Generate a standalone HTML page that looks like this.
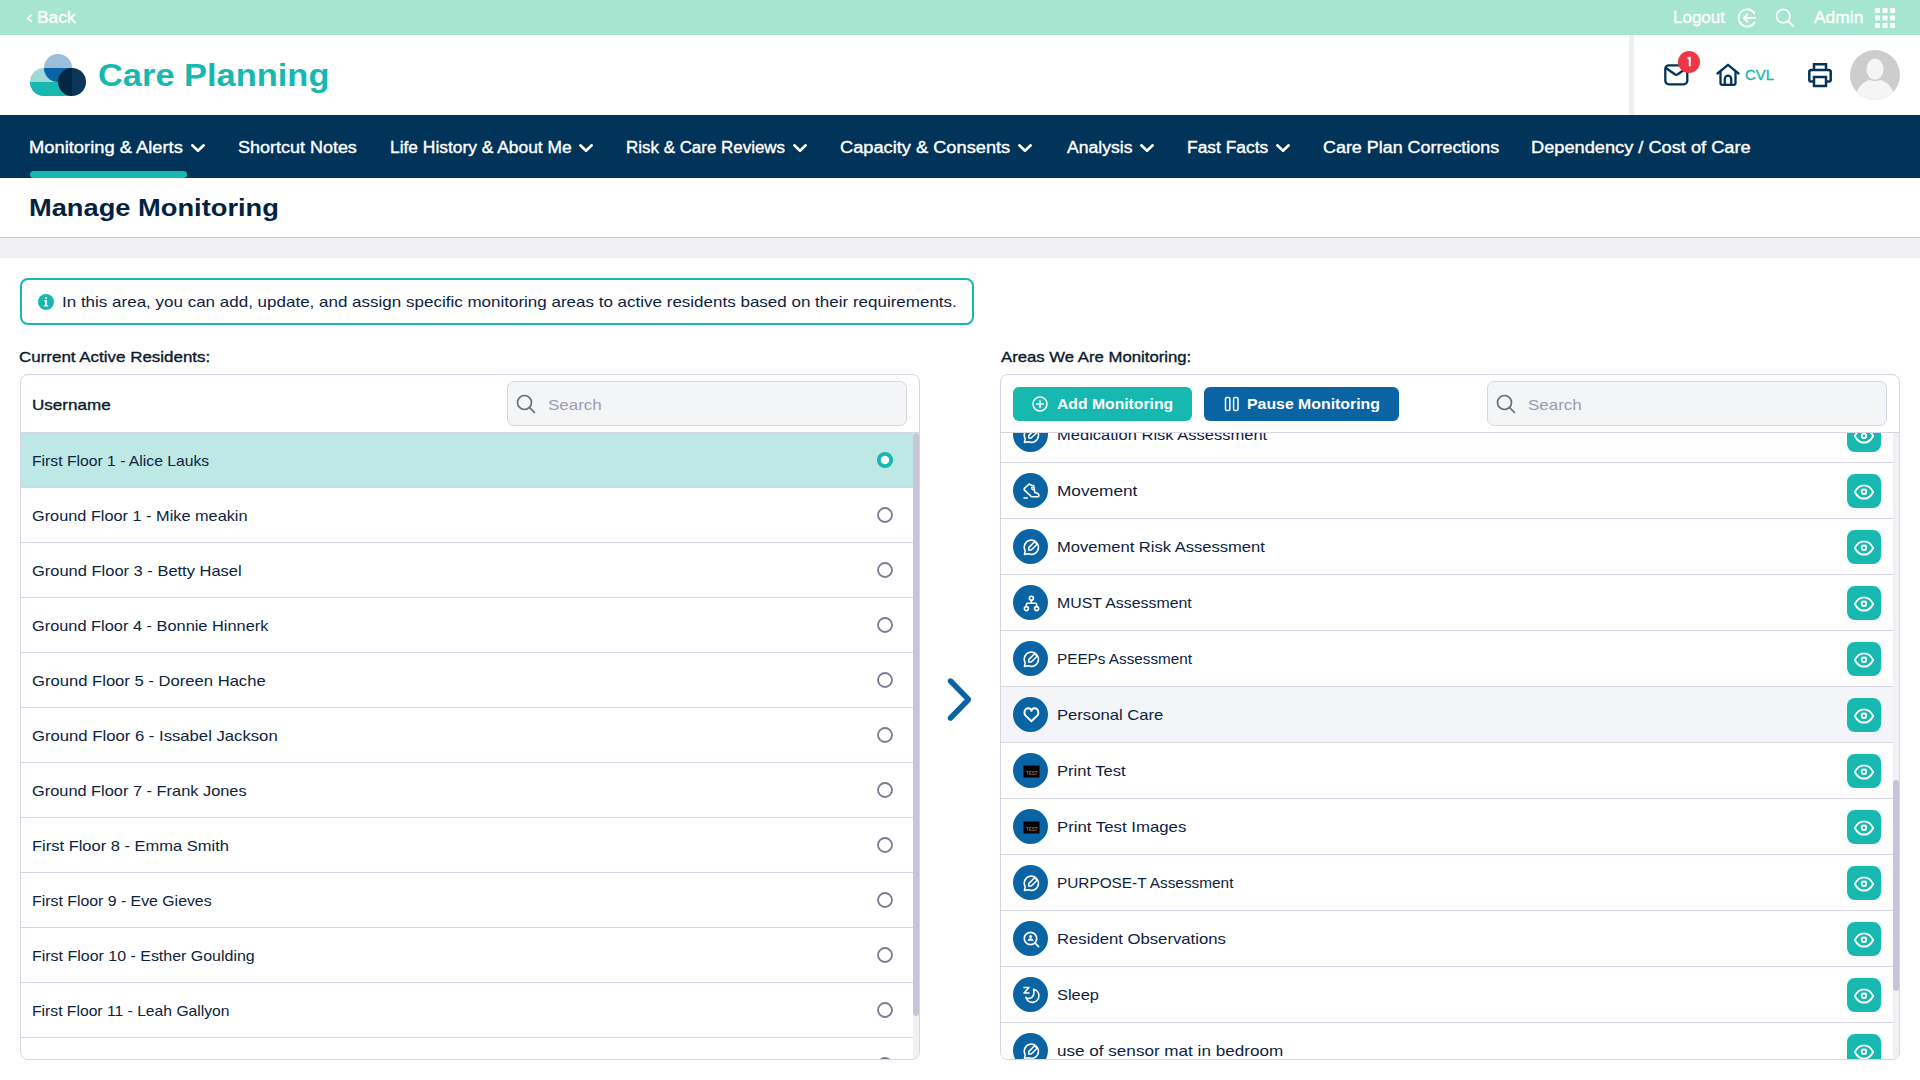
<!DOCTYPE html>
<html><head><meta charset='utf-8'><style>
*{box-sizing:border-box;margin:0;padding:0}
html,body{width:1920px;height:1080px;overflow:hidden;background:#fff;font-family:"Liberation Sans",sans-serif}
.t{position:absolute;white-space:pre;line-height:1;transform-origin:0 0}
.a{position:absolute;overflow:visible}
.b{position:absolute}
.lrow{position:absolute;left:21px;width:892px;height:55px;border-bottom:1px solid #d5d5e3;background:#fff}
.lrow.sel{background:#bee8e6}
.rrow{position:absolute;left:1001px;width:892px;height:56px;border-bottom:1px solid #d5d5e3;background:#fff}
.rrow.hov{background:#f4f5f8}
.ric{position:absolute;left:1013px;width:35px;height:35px;border-radius:50%;background:#0a64a3}
.eye{position:absolute;left:1847px;width:34px;height:34px;border-radius:8px;background:#17b8b0}
.eye svg{position:absolute}
</style></head><body>
<div class='b' style='left:0;top:0;width:1920px;height:35px;background:#a6e5cf'></div>
<svg class='a' style='left:24px;top:12px' width='12' height='12'><path d='M7.3 3.3 L3.6 6.3 L7.3 9.3' fill='none' stroke='#fff' stroke-width='1.9' stroke-linecap='round' stroke-linejoin='round'/></svg>
<svg class='a' style='left:1735px;top:7px' width='24' height='22' viewBox='0 0 24 22'><path d='M19.5 6.5 A8.6 8.6 0 1 0 19.5 15.5' fill='none' stroke='#fff' stroke-width='1.8' stroke-linecap='round'/><path d='M20.3 11 H8.8 M12.3 7.3 L8.8 11 L12.3 14.7' fill='none' stroke='#fff' stroke-width='1.8' stroke-linecap='round' stroke-linejoin='round'/></svg>
<svg class='a' style='left:1774px;top:7px' width='22' height='22' viewBox='0 0 22 22'><circle cx='9.3' cy='9.1' r='6.7' fill='none' stroke='#fff' stroke-width='1.7'/><path d='M14.2 14.1 L19.2 19.1' stroke='#fff' stroke-width='1.7' stroke-linecap='round'/></svg>
<svg class='a' style='left:1875px;top:8px' width='20' height='20' viewBox='0 0 20 20'><rect x='0' y='0' width='5' height='5' rx='0.7' fill='#fff'/><rect x='7.5' y='0' width='5' height='5' rx='0.7' fill='#fff'/><rect x='15' y='0' width='5' height='5' rx='0.7' fill='#fff'/><rect x='0' y='7.5' width='5' height='5' rx='0.7' fill='#fff'/><rect x='7.5' y='7.5' width='5' height='5' rx='0.7' fill='#fff'/><rect x='15' y='7.5' width='5' height='5' rx='0.7' fill='#fff'/><rect x='0' y='15' width='5' height='5' rx='0.7' fill='#fff'/><rect x='7.5' y='15' width='5' height='5' rx='0.7' fill='#fff'/><rect x='15' y='15' width='5' height='5' rx='0.7' fill='#fff'/></svg>

<!-- header -->
<svg class='a' style='left:30px;top:53px' width='58' height='45' viewBox='30 53 58 45'>
<defs><clipPath id='ctop'><rect x='0' y='0' width='200' height='68'/></clipPath><clipPath id='cbot'><rect x='0' y='68' width='200' height='40'/></clipPath>
<clipPath id='cl'><rect x='0' y='0' width='72' height='200'/></clipPath><clipPath id='cr'><rect x='72' y='0' width='100' height='200'/></clipPath></defs>
<rect x='30' y='68' width='42' height='28' rx='14' fill='#9fd9d6'/>
<path d='M44 82 H72 V96 H44 A14 14 0 0 1 30 82 Z' fill='#17b8b0'/>
<circle cx='58' cy='68' r='14' fill='#9bbfdb'/>
<path d='M44 68 H72 A14 14 0 0 1 44 68 Z' fill='#0a63a5'/>
<circle cx='72' cy='82' r='14' fill='#012745' clip-path='url(#cl)'/>
<circle cx='72' cy='82' r='14' fill='#0c3659' clip-path='url(#cr)'/>
</svg>
<div class='b' style='left:1629px;top:35px;width:5px;height:80px;background:#eeeef3'></div>
<svg class='a' style='left:1662px;top:62px' width='28' height='25' viewBox='0 0 28 25'><rect x='3.3' y='3.3' width='22' height='19' rx='3.5' fill='none' stroke='#023459' stroke-width='2.3'/><path d='M4.3 6.3 L12.8 12.3 Q14.3 13.3 15.8 12.3 L24.3 6.3' fill='none' stroke='#023459' stroke-width='2.3' stroke-linejoin='round' stroke-linecap='round'/></svg>
<svg class='a' style='left:1678px;top:51px' width='22' height='22'><circle cx='11' cy='11' r='11' fill='#f03545'/><path d='M9.6 7.6 L11.8 6.6 V15.2' fill='none' stroke='#fff' stroke-width='2' stroke-linejoin='round'/></svg>
<svg class='a' style='left:1714px;top:62px' width='28' height='26' viewBox='0 0 28 26'><path d='M3.5 11.5 L14 2.8 L24.5 11.5' fill='none' stroke='#023459' stroke-width='2.3' stroke-linecap='round' stroke-linejoin='round'/><path d='M6.5 9.5 V21 Q6.5 22.8 8.3 22.8 H19.7 Q21.5 22.8 21.5 21 V9.5' fill='none' stroke='#023459' stroke-width='2.3' stroke-linejoin='round'/><path d='M10.8 23 V16.8 A3.2 3.2 0 0 1 17.2 16.8 V23' fill='none' stroke='#023459' stroke-width='2.3'/></svg>
<svg class='a' style='left:1806px;top:61px' width='28' height='28' viewBox='0 0 28 28'><path d='M8 9 V3.3 H20 V9' fill='none' stroke='#023459' stroke-width='2.5'/><path d='M7.5 20.5 H4.5 Q3.3 20.5 3.3 19.3 V11 Q3.3 9 5.3 9 H22.7 Q24.7 9 24.7 11 V19.3 Q24.7 20.5 23.5 20.5 H20.5' fill='none' stroke='#023459' stroke-width='2.5' stroke-linejoin='round'/><rect x='8' y='16' width='12' height='9' fill='none' stroke='#023459' stroke-width='2.5'/></svg>
<svg class='a' style='left:1850px;top:50px' width='50' height='50' viewBox='0 0 50 50'><defs><clipPath id='av'><circle cx='25' cy='25' r='25'/></clipPath></defs><circle cx='25' cy='25' r='25' fill='#cdcdcd'/><g clip-path='url(#av)'><path d='M5.5 50 Q6 31 25 29 Q44 31 44.5 50 Z' fill='#f5f5f5'/><ellipse cx='25' cy='19.2' rx='9.3' ry='11.3' fill='#f5f5f5' stroke='#cdcdcd' stroke-width='1.4'/></g></svg>

<!-- nav -->
<div class='b' style='left:0;top:115px;width:1920px;height:63px;background:#023459'></div>
<div class='b' style='left:30px;top:171px;width:157px;height:7px;background:#17b8b0;border-radius:4px'></div>
<svg class='a' style='left:191px;top:144px' width='14' height='8' viewBox='0 0 14 8'><path d='M1.3 1.3 L7.0 6.7 L12.7 1.3' fill='none' stroke='#fff' stroke-width='2.6' stroke-linecap='round' stroke-linejoin='round'/></svg><svg class='a' style='left:579px;top:144px' width='14' height='8' viewBox='0 0 14 8'><path d='M1.3 1.3 L7.0 6.7 L12.7 1.3' fill='none' stroke='#fff' stroke-width='2.6' stroke-linecap='round' stroke-linejoin='round'/></svg><svg class='a' style='left:793px;top:144px' width='14' height='8' viewBox='0 0 14 8'><path d='M1.3 1.3 L7.0 6.7 L12.7 1.3' fill='none' stroke='#fff' stroke-width='2.6' stroke-linecap='round' stroke-linejoin='round'/></svg><svg class='a' style='left:1018px;top:144px' width='14' height='8' viewBox='0 0 14 8'><path d='M1.3 1.3 L7.0 6.7 L12.7 1.3' fill='none' stroke='#fff' stroke-width='2.6' stroke-linecap='round' stroke-linejoin='round'/></svg><svg class='a' style='left:1140px;top:144px' width='14' height='8' viewBox='0 0 14 8'><path d='M1.3 1.3 L7.0 6.7 L12.7 1.3' fill='none' stroke='#fff' stroke-width='2.6' stroke-linecap='round' stroke-linejoin='round'/></svg><svg class='a' style='left:1276px;top:144px' width='14' height='8' viewBox='0 0 14 8'><path d='M1.3 1.3 L7.0 6.7 L12.7 1.3' fill='none' stroke='#fff' stroke-width='2.6' stroke-linecap='round' stroke-linejoin='round'/></svg>

<div class='b' style='left:0;top:237px;width:1920px;height:1px;background:#c9cad9'></div>
<div class='b' style='left:0;top:238px;width:1920px;height:20px;background:#efeff4'></div>

<div class='b' style='left:20px;top:278px;width:954px;height:47px;border:2px solid #17b8b0;border-radius:8px'></div>
<svg class='a' style='left:38px;top:294px' width='16' height='16' viewBox='0 0 16 16'><circle cx='8' cy='8' r='8' fill='#17b8b0'/><rect x='7.1' y='6.2' width='1.8' height='5.6' fill='#fff'/><rect x='6.1' y='6.2' width='2.8' height='1.2' fill='#fff'/><rect x='5.9' y='11.2' width='4.2' height='1.3' fill='#fff'/><rect x='7.1' y='3.3' width='1.8' height='1.6' fill='#fff'/></svg>


<!-- left table -->
<div class='b' style='left:20px;top:374px;width:900px;height:686px;border:1px solid #d5d5e3;border-radius:8px;overflow:hidden;background:#fff'>
</div>
<div class='b' style='left:21px;top:433px;width:898px;height:626px;overflow:hidden;border-radius:0 0 7px 7px'>
 <div class='b' style='left:-21px;top:-433px;width:1920px;height:1600px'>
  <div class='lrow sel' style='top:433px'></div><svg class='a' style='left:876px;top:451px' width='18' height='18'><circle cx='9' cy='9' r='6.2' fill='#fff' stroke='#17b8b0' stroke-width='3.8'/></svg><div class='lrow' style='top:488px'></div><svg class='a' style='left:876px;top:506px' width='18' height='18'><circle cx='9' cy='9' r='7' fill='none' stroke='#7b7b95' stroke-width='1.8'/></svg><div class='lrow' style='top:543px'></div><svg class='a' style='left:876px;top:561px' width='18' height='18'><circle cx='9' cy='9' r='7' fill='none' stroke='#7b7b95' stroke-width='1.8'/></svg><div class='lrow' style='top:598px'></div><svg class='a' style='left:876px;top:616px' width='18' height='18'><circle cx='9' cy='9' r='7' fill='none' stroke='#7b7b95' stroke-width='1.8'/></svg><div class='lrow' style='top:653px'></div><svg class='a' style='left:876px;top:671px' width='18' height='18'><circle cx='9' cy='9' r='7' fill='none' stroke='#7b7b95' stroke-width='1.8'/></svg><div class='lrow' style='top:708px'></div><svg class='a' style='left:876px;top:726px' width='18' height='18'><circle cx='9' cy='9' r='7' fill='none' stroke='#7b7b95' stroke-width='1.8'/></svg><div class='lrow' style='top:763px'></div><svg class='a' style='left:876px;top:781px' width='18' height='18'><circle cx='9' cy='9' r='7' fill='none' stroke='#7b7b95' stroke-width='1.8'/></svg><div class='lrow' style='top:818px'></div><svg class='a' style='left:876px;top:836px' width='18' height='18'><circle cx='9' cy='9' r='7' fill='none' stroke='#7b7b95' stroke-width='1.8'/></svg><div class='lrow' style='top:873px'></div><svg class='a' style='left:876px;top:891px' width='18' height='18'><circle cx='9' cy='9' r='7' fill='none' stroke='#7b7b95' stroke-width='1.8'/></svg><div class='lrow' style='top:928px'></div><svg class='a' style='left:876px;top:946px' width='18' height='18'><circle cx='9' cy='9' r='7' fill='none' stroke='#7b7b95' stroke-width='1.8'/></svg><div class='lrow' style='top:983px'></div><svg class='a' style='left:876px;top:1001px' width='18' height='18'><circle cx='9' cy='9' r='7' fill='none' stroke='#7b7b95' stroke-width='1.8'/></svg><div class='lrow' style='top:1038px'></div><svg class='a' style='left:876px;top:1056px' width='18' height='18'><circle cx='9' cy='9' r='7' fill='none' stroke='#7b7b95' stroke-width='1.8'/></svg><div class='t' style='left:32.45px;top:453.00px;font-size:15px;font-weight:400;color:#0c2340;transform:scaleX(1.0470);'>First Floor 1 - Alice Lauks</div><div class='t' style='left:32.41px;top:508.00px;font-size:15px;font-weight:400;color:#0c2340;transform:scaleX(1.0863);'>Ground Floor 1 - Mike meakin</div><div class='t' style='left:32.40px;top:563.00px;font-size:15px;font-weight:400;color:#0c2340;transform:scaleX(1.0979);'>Ground Floor 3 - Betty Hasel</div><div class='t' style='left:32.41px;top:618.00px;font-size:15px;font-weight:400;color:#0c2340;transform:scaleX(1.0903);'>Ground Floor 4 - Bonnie Hinnerk</div><div class='t' style='left:32.39px;top:673.00px;font-size:15px;font-weight:400;color:#0c2340;transform:scaleX(1.1077);'>Ground Floor 5 - Doreen Hache</div><div class='t' style='left:32.39px;top:728.00px;font-size:15px;font-weight:400;color:#0c2340;transform:scaleX(1.1119);'>Ground Floor 6 - Issabel Jackson</div><div class='t' style='left:32.41px;top:783.00px;font-size:15px;font-weight:400;color:#0c2340;transform:scaleX(1.0908);'>Ground Floor 7 - Frank Jones</div><div class='t' style='left:32.40px;top:838.00px;font-size:15px;font-weight:400;color:#0c2340;transform:scaleX(1.0994);'>First Floor 8 - Emma Smith</div><div class='t' style='left:32.44px;top:893.00px;font-size:15px;font-weight:400;color:#0c2340;transform:scaleX(1.0562);'>First Floor 9 - Eve Gieves</div><div class='t' style='left:32.44px;top:948.00px;font-size:15px;font-weight:400;color:#0c2340;transform:scaleX(1.0644);'>First Floor 10 - Esther Goulding</div><div class='t' style='left:32.45px;top:1003.00px;font-size:15px;font-weight:400;color:#0c2340;transform:scaleX(1.0455);'>First Floor 11 - Leah Gallyon</div>
 </div>
 <div class='b' style='left:892px;top:0;width:6px;height:627px;background:#f0f0f5'></div>
 <div class='b' style='left:892px;top:0;width:6px;height:583px;background:#c5c6d8;border-radius:3px'></div>
</div>
<div class='b' style='left:21px;top:432px;width:898px;height:1px;background:#d5d5e3'></div>
<div class='b' style='left:507px;top:381px;width:400px;height:45px;border:1px solid #d6d6e2;border-radius:7px;background:#f4f5f7'></div>
<svg class='a' style='left:515px;top:393px' width='22' height='22' viewBox='0 0 22 22'><circle cx='9.5' cy='9.5' r='7' fill='none' stroke='#6b6d7c' stroke-width='1.7'/><path d='M14.5 14.5 L19.5 19.5' stroke='#6b6d7c' stroke-width='1.7' stroke-linecap='round'/></svg>

<!-- arrow -->
<svg class='a' style='left:940px;top:670px' width='40' height='60' viewBox='0 0 40 60'><path d='M10.5 11 L28.5 29.5 L10.5 48' fill='none' stroke='#0a64a3' stroke-width='5.4' stroke-linecap='round' stroke-linejoin='round'/></svg>

<!-- right panel -->
<div class='b' style='left:1000px;top:374px;width:900px;height:686px;border:1px solid #d5d5e3;border-radius:8px;background:#fff'></div>
<div class='b' style='left:1001px;top:433px;width:898px;height:626px;overflow:hidden;border-radius:0 0 7px 7px'>
 <div class='b' style='left:-1001px;top:-433px;width:1920px;height:1700px'>
  <div class='rrow' style='top:407px'></div><div class='ric' style='top:417.0px'><svg width='18' height='18' viewBox='0 0 18 18' style='position:absolute;left:8.5px;top:8.5px'><path d='M3.25 12.85 A7.1 7.1 0 1 1 6.4 15.7 L2.5 16.5 Z' fill='none' stroke='#fff' stroke-linecap='round' stroke-linejoin='round' stroke-width='1.6'/><path d='M6.7 12.0 V9.6 L12.6 3.7 L15.1 6.2 L9.2 12.0 Z' fill='none' stroke='#fff' stroke-linecap='round' stroke-linejoin='round' stroke-width='1.5'/></svg></div><div class='eye' style='top:418px'><svg width='22' height='22' viewBox='0 0 24 24' style='left:6px;top:6.8px'><path d='M2 12 C4.5 7 8 4.8 12 4.8 C16 4.8 19.5 7 22 12 C19.5 17 16 19.2 12 19.2 C8 19.2 4.5 17 2 12 Z' fill='none' stroke='#fff' stroke-width='2' stroke-linejoin='round'/><circle cx='12' cy='11.8' r='2.5' fill='none' stroke='#fff' stroke-width='2'/></svg></div><div class='rrow' style='top:463px'></div><div class='ric' style='top:473.0px'><svg width='18' height='18' viewBox='0 0 18 18' style='position:absolute;left:8.5px;top:8.5px'><path d='M6.8 2.3 L2.4 6.4 Q1.7 7.3 2.5 8.1 L9.2 14.3 Q9.8 14.8 10.6 14.8 L15.6 14.8 Q16.9 14.8 16.9 13.4 Q16.9 12.1 15.6 11.5 L12.8 10.3 L11.7 3.6 L9.5 3.5 L8.0 2.4 Q7.4 2.0 6.8 2.3 Z' fill='none' stroke='#fff' stroke-linecap='round' stroke-linejoin='round' stroke-width='1.6'/><path d='M11.8 5.4 L9.6 5.5 L10.2 7.5 L12.2 7.6' fill='none' stroke='#fff' stroke-linecap='round' stroke-linejoin='round' stroke-width='1.3'/><path d='M2.0 16.1 L5.4 16.1' fill='none' stroke='#fff' stroke-linecap='round' stroke-linejoin='round' stroke-width='1.5'/></svg></div><div class='eye' style='top:474px'><svg width='22' height='22' viewBox='0 0 24 24' style='left:6px;top:6.8px'><path d='M2 12 C4.5 7 8 4.8 12 4.8 C16 4.8 19.5 7 22 12 C19.5 17 16 19.2 12 19.2 C8 19.2 4.5 17 2 12 Z' fill='none' stroke='#fff' stroke-width='2' stroke-linejoin='round'/><circle cx='12' cy='11.8' r='2.5' fill='none' stroke='#fff' stroke-width='2'/></svg></div><div class='rrow' style='top:519px'></div><div class='ric' style='top:529.0px'><svg width='18' height='18' viewBox='0 0 18 18' style='position:absolute;left:8.5px;top:8.5px'><path d='M3.25 12.85 A7.1 7.1 0 1 1 6.4 15.7 L2.5 16.5 Z' fill='none' stroke='#fff' stroke-linecap='round' stroke-linejoin='round' stroke-width='1.6'/><path d='M6.7 12.0 V9.6 L12.6 3.7 L15.1 6.2 L9.2 12.0 Z' fill='none' stroke='#fff' stroke-linecap='round' stroke-linejoin='round' stroke-width='1.5'/></svg></div><div class='eye' style='top:530px'><svg width='22' height='22' viewBox='0 0 24 24' style='left:6px;top:6.8px'><path d='M2 12 C4.5 7 8 4.8 12 4.8 C16 4.8 19.5 7 22 12 C19.5 17 16 19.2 12 19.2 C8 19.2 4.5 17 2 12 Z' fill='none' stroke='#fff' stroke-width='2' stroke-linejoin='round'/><circle cx='12' cy='11.8' r='2.5' fill='none' stroke='#fff' stroke-width='2'/></svg></div><div class='rrow' style='top:575px'></div><div class='ric' style='top:585.0px'><svg width='18' height='18' viewBox='0 0 18 18' style='position:absolute;left:8.5px;top:8.5px'><circle cx='9.4' cy='4.2' r='2' fill='none' stroke='#fff' stroke-linecap='round' stroke-linejoin='round' stroke-width='1.6'/><circle cx='4.4' cy='14.6' r='2' fill='none' stroke='#fff' stroke-linecap='round' stroke-linejoin='round' stroke-width='1.6'/><circle cx='14.6' cy='14.6' r='2' fill='none' stroke='#fff' stroke-linecap='round' stroke-linejoin='round' stroke-width='1.6'/><path d='M9.4 6.2 V9.3 M4.4 12.6 V10.3 Q4.4 9.3 5.4 9.3 H13.6 Q14.6 9.3 14.6 10.3 V12.6' fill='none' stroke='#fff' stroke-linecap='round' stroke-linejoin='round' stroke-width='1.6'/></svg></div><div class='eye' style='top:586px'><svg width='22' height='22' viewBox='0 0 24 24' style='left:6px;top:6.8px'><path d='M2 12 C4.5 7 8 4.8 12 4.8 C16 4.8 19.5 7 22 12 C19.5 17 16 19.2 12 19.2 C8 19.2 4.5 17 2 12 Z' fill='none' stroke='#fff' stroke-width='2' stroke-linejoin='round'/><circle cx='12' cy='11.8' r='2.5' fill='none' stroke='#fff' stroke-width='2'/></svg></div><div class='rrow' style='top:631px'></div><div class='ric' style='top:641.0px'><svg width='18' height='18' viewBox='0 0 18 18' style='position:absolute;left:8.5px;top:8.5px'><path d='M3.25 12.85 A7.1 7.1 0 1 1 6.4 15.7 L2.5 16.5 Z' fill='none' stroke='#fff' stroke-linecap='round' stroke-linejoin='round' stroke-width='1.6'/><path d='M6.7 12.0 V9.6 L12.6 3.7 L15.1 6.2 L9.2 12.0 Z' fill='none' stroke='#fff' stroke-linecap='round' stroke-linejoin='round' stroke-width='1.5'/></svg></div><div class='eye' style='top:642px'><svg width='22' height='22' viewBox='0 0 24 24' style='left:6px;top:6.8px'><path d='M2 12 C4.5 7 8 4.8 12 4.8 C16 4.8 19.5 7 22 12 C19.5 17 16 19.2 12 19.2 C8 19.2 4.5 17 2 12 Z' fill='none' stroke='#fff' stroke-width='2' stroke-linejoin='round'/><circle cx='12' cy='11.8' r='2.5' fill='none' stroke='#fff' stroke-width='2'/></svg></div><div class='rrow hov' style='top:687px'></div><div class='ric' style='top:697.0px'><svg width='18' height='18' viewBox='0 0 18 18' style='position:absolute;left:8.5px;top:8.5px'><path d='M9.4 15.2 L3.6 9.6 C2 8 2 4.5 4 3 C5.8 1.6 8.4 2 9.4 4.8 C10.4 2 13 1.6 14.8 3 C16.8 4.5 16.8 8 15.2 9.6 Z' fill='none' stroke='#fff' stroke-linecap='round' stroke-linejoin='round' stroke-width='2'/></svg></div><div class='eye' style='top:698px'><svg width='22' height='22' viewBox='0 0 24 24' style='left:6px;top:6.8px'><path d='M2 12 C4.5 7 8 4.8 12 4.8 C16 4.8 19.5 7 22 12 C19.5 17 16 19.2 12 19.2 C8 19.2 4.5 17 2 12 Z' fill='none' stroke='#fff' stroke-width='2' stroke-linejoin='round'/><circle cx='12' cy='11.8' r='2.5' fill='none' stroke='#fff' stroke-width='2'/></svg></div><div class='rrow' style='top:743px'></div><div class='ric' style='top:753.0px'><svg width='18' height='18' viewBox='0 0 18 18' style='position:absolute;left:8.5px;top:8.5px'><rect x='1.5' y='3.5' width='16' height='12' fill='#000'/><text x='9.8' y='12.6' font-size='5.5' text-anchor='middle' fill='#9a6a38' font-family='Liberation Sans' font-weight='700' textLength='11.4' lengthAdjust='spacingAndGlyphs'>TEST</text></svg></div><div class='eye' style='top:754px'><svg width='22' height='22' viewBox='0 0 24 24' style='left:6px;top:6.8px'><path d='M2 12 C4.5 7 8 4.8 12 4.8 C16 4.8 19.5 7 22 12 C19.5 17 16 19.2 12 19.2 C8 19.2 4.5 17 2 12 Z' fill='none' stroke='#fff' stroke-width='2' stroke-linejoin='round'/><circle cx='12' cy='11.8' r='2.5' fill='none' stroke='#fff' stroke-width='2'/></svg></div><div class='rrow' style='top:799px'></div><div class='ric' style='top:809.0px'><svg width='18' height='18' viewBox='0 0 18 18' style='position:absolute;left:8.5px;top:8.5px'><rect x='1.5' y='3.5' width='16' height='12' fill='#000'/><text x='9.8' y='12.6' font-size='5.5' text-anchor='middle' fill='#9a6a38' font-family='Liberation Sans' font-weight='700' textLength='11.4' lengthAdjust='spacingAndGlyphs'>TEST</text></svg></div><div class='eye' style='top:810px'><svg width='22' height='22' viewBox='0 0 24 24' style='left:6px;top:6.8px'><path d='M2 12 C4.5 7 8 4.8 12 4.8 C16 4.8 19.5 7 22 12 C19.5 17 16 19.2 12 19.2 C8 19.2 4.5 17 2 12 Z' fill='none' stroke='#fff' stroke-width='2' stroke-linejoin='round'/><circle cx='12' cy='11.8' r='2.5' fill='none' stroke='#fff' stroke-width='2'/></svg></div><div class='rrow' style='top:855px'></div><div class='ric' style='top:865.0px'><svg width='18' height='18' viewBox='0 0 18 18' style='position:absolute;left:8.5px;top:8.5px'><path d='M3.25 12.85 A7.1 7.1 0 1 1 6.4 15.7 L2.5 16.5 Z' fill='none' stroke='#fff' stroke-linecap='round' stroke-linejoin='round' stroke-width='1.6'/><path d='M6.7 12.0 V9.6 L12.6 3.7 L15.1 6.2 L9.2 12.0 Z' fill='none' stroke='#fff' stroke-linecap='round' stroke-linejoin='round' stroke-width='1.5'/></svg></div><div class='eye' style='top:866px'><svg width='22' height='22' viewBox='0 0 24 24' style='left:6px;top:6.8px'><path d='M2 12 C4.5 7 8 4.8 12 4.8 C16 4.8 19.5 7 22 12 C19.5 17 16 19.2 12 19.2 C8 19.2 4.5 17 2 12 Z' fill='none' stroke='#fff' stroke-width='2' stroke-linejoin='round'/><circle cx='12' cy='11.8' r='2.5' fill='none' stroke='#fff' stroke-width='2'/></svg></div><div class='rrow' style='top:911px'></div><div class='ric' style='top:921.0px'><svg width='18' height='18' viewBox='0 0 18 18' style='position:absolute;left:8.5px;top:8.5px'><circle cx='8.5' cy='8.5' r='6.2' fill='none' stroke='#fff' stroke-linecap='round' stroke-linejoin='round' stroke-width='1.7'/><path d='M13.2 13.2 L16.6 16.6' fill='none' stroke='#fff' stroke-linecap='round' stroke-linejoin='round' stroke-width='1.7'/><circle cx='8.6' cy='6.6' r='1.5' fill='#fff'/><path d='M5.9 10.6 Q6.6 8.4 8.6 8.4 Q10.6 8.4 11.3 10.6 Z' fill='#fff' stroke='#fff' stroke-width='0.6' stroke-linejoin='round'/></svg></div><div class='eye' style='top:922px'><svg width='22' height='22' viewBox='0 0 24 24' style='left:6px;top:6.8px'><path d='M2 12 C4.5 7 8 4.8 12 4.8 C16 4.8 19.5 7 22 12 C19.5 17 16 19.2 12 19.2 C8 19.2 4.5 17 2 12 Z' fill='none' stroke='#fff' stroke-width='2' stroke-linejoin='round'/><circle cx='12' cy='11.8' r='2.5' fill='none' stroke='#fff' stroke-width='2'/></svg></div><div class='rrow' style='top:967px'></div><div class='ric' style='top:977.0px'><svg width='18' height='18' viewBox='0 0 18 18' style='position:absolute;left:8.5px;top:8.5px'><path d='M11.6 3.3 A6.6 6.6 0 1 1 3.9 11.4 Q6.5 13.4 9.5 11.6 Q12.8 9.0 11.6 3.3 Z' fill='none' stroke='#fff' stroke-linecap='round' stroke-linejoin='round' stroke-width='1.6'/><path d='M2.0 1.4 H7.0 L2.0 6.9 H7.0' fill='none' stroke='#fff' stroke-linecap='round' stroke-linejoin='round' stroke-width='1.5'/></svg></div><div class='eye' style='top:978px'><svg width='22' height='22' viewBox='0 0 24 24' style='left:6px;top:6.8px'><path d='M2 12 C4.5 7 8 4.8 12 4.8 C16 4.8 19.5 7 22 12 C19.5 17 16 19.2 12 19.2 C8 19.2 4.5 17 2 12 Z' fill='none' stroke='#fff' stroke-width='2' stroke-linejoin='round'/><circle cx='12' cy='11.8' r='2.5' fill='none' stroke='#fff' stroke-width='2'/></svg></div><div class='rrow' style='top:1023px'></div><div class='ric' style='top:1033.0px'><svg width='18' height='18' viewBox='0 0 18 18' style='position:absolute;left:8.5px;top:8.5px'><path d='M3.25 12.85 A7.1 7.1 0 1 1 6.4 15.7 L2.5 16.5 Z' fill='none' stroke='#fff' stroke-linecap='round' stroke-linejoin='round' stroke-width='1.6'/><path d='M6.7 12.0 V9.6 L12.6 3.7 L15.1 6.2 L9.2 12.0 Z' fill='none' stroke='#fff' stroke-linecap='round' stroke-linejoin='round' stroke-width='1.5'/></svg></div><div class='eye' style='top:1034px'><svg width='22' height='22' viewBox='0 0 24 24' style='left:6px;top:6.8px'><path d='M2 12 C4.5 7 8 4.8 12 4.8 C16 4.8 19.5 7 22 12 C19.5 17 16 19.2 12 19.2 C8 19.2 4.5 17 2 12 Z' fill='none' stroke='#fff' stroke-width='2' stroke-linejoin='round'/><circle cx='12' cy='11.8' r='2.5' fill='none' stroke='#fff' stroke-width='2'/></svg></div><div class='t' style='left:1057.40px;top:427.00px;font-size:15px;font-weight:400;color:#0c2340;transform:scaleX(1.1011);'>Medication Risk Assessment</div><div class='t' style='left:1057.35px;top:483.00px;font-size:15px;font-weight:400;color:#0c2340;transform:scaleX(1.1478);'>Movement</div><div class='t' style='left:1057.40px;top:539.00px;font-size:15px;font-weight:400;color:#0c2340;transform:scaleX(1.1032);'>Movement Risk Assessment</div><div class='t' style='left:1057.44px;top:595.00px;font-size:15px;font-weight:400;color:#0c2340;transform:scaleX(1.0587);'>MUST Assessment</div><div class='t' style='left:1057.48px;top:651.00px;font-size:15px;font-weight:400;color:#0c2340;transform:scaleX(1.0189);'>PEEPs Assessment</div><div class='t' style='left:1057.39px;top:707.00px;font-size:15px;font-weight:400;color:#0c2340;transform:scaleX(1.1085);'>Personal Care</div><div class='t' style='left:1057.40px;top:763.00px;font-size:15px;font-weight:400;color:#0c2340;transform:scaleX(1.1016);'>Print Test</div><div class='t' style='left:1057.38px;top:819.00px;font-size:15px;font-weight:400;color:#0c2340;transform:scaleX(1.1184);'>Print Test Images</div><div class='t' style='left:1057.48px;top:875.00px;font-size:15px;font-weight:400;color:#0c2340;transform:scaleX(1.0240);'>PURPOSE-T Assessment</div><div class='t' style='left:1057.39px;top:931.00px;font-size:15px;font-weight:400;color:#0c2340;transform:scaleX(1.1127);'>Resident Observations</div><div class='t' style='left:1057.41px;top:987.00px;font-size:15px;font-weight:400;color:#0c2340;transform:scaleX(1.0946);'>Sleep</div><div class='t' style='left:1057.36px;top:1043.00px;font-size:15px;font-weight:400;color:#0c2340;transform:scaleX(1.1396);'>use of sensor mat in bedroom</div>
 </div>
 <div class='b' style='left:892px;top:0;width:6px;height:627px;background:#f0f0f5'></div>
 <div class='b' style='left:892px;top:347px;width:6px;height:211px;background:#c4c5d8;border-radius:3px'></div>
</div>
<div class='b' style='left:1001px;top:432px;width:898px;height:1px;background:#d5d5e3'></div>
<div class='b' style='left:1013px;top:387px;width:179px;height:34px;border-radius:6px;background:#17b8b0'></div>
<svg class='a' style='left:1031px;top:395px' width='18' height='18' viewBox='0 0 18 18'><circle cx='9' cy='9' r='7' fill='none' stroke='#fff' stroke-width='1.5'/><path d='M9 5.5 V12.5 M5.5 9 H12.5' stroke='#fff' stroke-width='1.5' stroke-linecap='round'/></svg>
<div class='b' style='left:1204px;top:387px;width:195px;height:34px;border-radius:6px;background:#0a64a3'></div>
<svg class='a' style='left:1223px;top:395px' width='18' height='18' viewBox='0 0 18 18'><rect x='2.5' y='2.5' width='4.4' height='13' rx='1.3' fill='none' stroke='#fff' stroke-width='1.5'/><rect x='10.6' y='2.5' width='4.4' height='13' rx='1.3' fill='none' stroke='#fff' stroke-width='1.5'/></svg>
<div class='b' style='left:1487px;top:381px;width:400px;height:45px;border:1px solid #d6d6e2;border-radius:7px;background:#f4f5f7'></div>
<svg class='a' style='left:1495px;top:393px' width='22' height='22' viewBox='0 0 22 22'><circle cx='9.5' cy='9.5' r='7' fill='none' stroke='#6b6d7c' stroke-width='1.7'/><path d='M14.5 14.5 L19.5 19.5' stroke='#6b6d7c' stroke-width='1.7' stroke-linecap='round'/></svg>
<div class='t' style='left:36.91px;top:10.00px;font-size:16px;font-weight:400;color:#ffffff;transform:scaleX(1.0882);-webkit-text-stroke:0.35px currentColor'>Back</div><div class='t' style='left:1672.94px;top:10.00px;font-size:16px;font-weight:400;color:#ffffff;transform:scaleX(1.0625);-webkit-text-stroke:0.35px currentColor'>Logout</div><div class='t' style='left:1814.00px;top:10.00px;font-size:16px;font-weight:400;color:#ffffff;transform:scaleX(1.0889);-webkit-text-stroke:0.35px currentColor'>Admin</div><div class='t' style='left:97.92px;top:59.00px;font-size:32px;font-weight:700;color:#17b8b0;transform:scaleX(1.0755);'>Care Planning</div><div class='t' style='left:1745.00px;top:67.00px;font-size:15px;font-weight:400;color:#17b8b0;transform:scaleX(1.0000);-webkit-text-stroke:0.35px currentColor'>CVL</div><div class='t' style='left:29.25px;top:140.00px;font-size:16px;font-weight:400;color:#ffffff;transform:scaleX(1.1459);-webkit-text-stroke:0.35px currentColor'>Monitoring &amp; Alerts</div><div class='t' style='left:237.88px;top:140.00px;font-size:16px;font-weight:400;color:#ffffff;transform:scaleX(1.1231);-webkit-text-stroke:0.35px currentColor'>Shortcut Notes</div><div class='t' style='left:389.51px;top:140.00px;font-size:16px;font-weight:400;color:#ffffff;transform:scaleX(1.0867);-webkit-text-stroke:0.35px currentColor'>Life History &amp; About Me</div><div class='t' style='left:625.94px;top:140.00px;font-size:16px;font-weight:400;color:#ffffff;transform:scaleX(1.0584);-webkit-text-stroke:0.35px currentColor'>Risk &amp; Care Reviews</div><div class='t' style='left:839.86px;top:140.00px;font-size:16px;font-weight:400;color:#ffffff;transform:scaleX(1.1392);-webkit-text-stroke:0.35px currentColor'>Capacity &amp; Consents</div><div class='t' style='left:1066.80px;top:140.00px;font-size:16px;font-weight:400;color:#ffffff;transform:scaleX(1.0983);-webkit-text-stroke:0.35px currentColor'>Analysis</div><div class='t' style='left:1186.91px;top:140.00px;font-size:16px;font-weight:400;color:#ffffff;transform:scaleX(1.0890);-webkit-text-stroke:0.35px currentColor'>Fast Facts</div><div class='t' style='left:1322.88px;top:140.00px;font-size:16px;font-weight:400;color:#ffffff;transform:scaleX(1.1192);-webkit-text-stroke:0.35px currentColor'>Care Plan Corrections</div><div class='t' style='left:1531.46px;top:140.00px;font-size:16px;font-weight:400;color:#ffffff;transform:scaleX(1.1382);-webkit-text-stroke:0.35px currentColor'>Dependency / Cost of Care</div><div class='t' style='left:29.23px;top:196.00px;font-size:24px;font-weight:700;color:#03223f;transform:scaleX(1.1359);'>Manage Monitoring</div><div class='t' style='left:61.87px;top:294.00px;font-size:15px;font-weight:400;color:#0c2340;transform:scaleX(1.1332);'>In this area, you can add, update, and assign specific monitoring areas to active residents based on their requirements.</div><div class='t' style='left:19.17px;top:349.00px;font-size:15px;font-weight:400;color:#0a1a2e;transform:scaleX(1.1299);-webkit-text-stroke:0.35px currentColor'>Current Active Residents:</div><div class='t' style='left:1000.50px;top:349.00px;font-size:15px;font-weight:400;color:#0a1a2e;transform:scaleX(1.1147);-webkit-text-stroke:0.35px currentColor'>Areas We Are Monitoring:</div><div class='t' style='left:32.16px;top:397.00px;font-size:15px;font-weight:400;color:#0a1a2e;transform:scaleX(1.1382);-webkit-text-stroke:0.35px currentColor'>Username</div><div class='t' style='left:547.87px;top:397.00px;font-size:15px;font-weight:400;color:#9a9cb0;transform:scaleX(1.1304);'>Search</div><div class='t' style='left:1527.87px;top:397.00px;font-size:15px;font-weight:400;color:#9a9cb0;transform:scaleX(1.1304);'>Search</div><div class='t' style='left:1056.70px;top:396.00px;font-size:15px;font-weight:700;color:#ffffff;transform:scaleX(1.0482);'>Add Monitoring</div><div class='t' style='left:1246.94px;top:396.00px;font-size:15px;font-weight:700;color:#ffffff;transform:scaleX(1.0565);'>Pause Monitoring</div>
</body></html>
